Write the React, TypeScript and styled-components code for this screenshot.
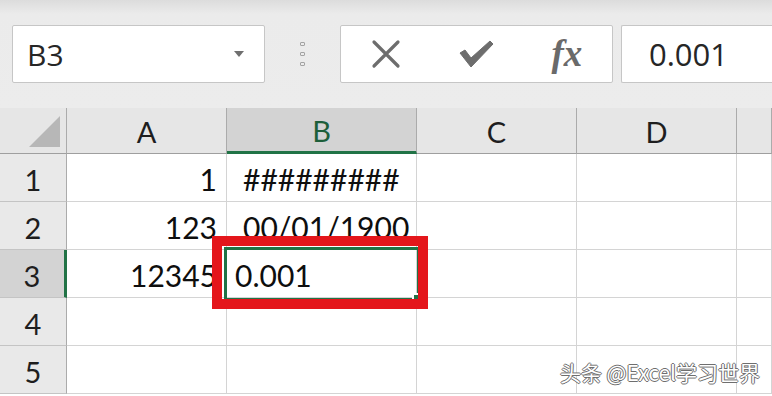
import { Fragment } from 'react';
import styled, { createGlobalStyle } from 'styled-components';

const GlobalStyle = createGlobalStyle`
  html, body {
    margin: 0;
    padding: 0;
    background: #fff;
    overflow: hidden;
  }
`;

const Page = styled.div`
  position: relative;
  width: 772px;
  height: 396px;
  overflow: hidden;
  background: #fff;
  font-family: Lato, 'Liberation Sans', sans-serif;
`;

// Formula bar
const Toolbar = styled.div`
  display: flex;
  align-items: flex-start;
  height: 108px;
  box-sizing: border-box;
  padding: 25px 0 0 12px;
  background: linear-gradient(#dcdcdc 0px, #ebebeb 14px, #ececec 100%);
`;
const Field = styled.div`
  height: 58px;
  box-sizing: border-box;
  background: #fff;
  border: 1px solid #c6c6c6;
  border-radius: 2px;
  display: flex;
  align-items: center;
  font-family: 'Open Sans', 'Noto Sans', sans-serif;
  font-size: 30px;
  color: #262626;
`;
const NameBox = styled(Field)`
  width: 253px;
  padding: 0 20px 0 14px;
  justify-content: space-between;
`;
const DropArrow = styled.span`
  width: 0;
  height: 0;
  border-left: 5px solid transparent;
  border-right: 5px solid transparent;
  border-top: 6px solid #6f6f6f;
`;
const Grip = styled.div`
  width: 75px;
  height: 58px;
  display: flex;
  flex-direction: column;
  align-items: center;
  justify-content: center;
  gap: 6px;
`;
const GripDot = styled.span`
  width: 5px;
  height: 4px;
  border: 1px solid #a3a3a3;
  border-radius: 1px;
  box-sizing: border-box;
`;
const FxBox = styled(Field)`
  width: 273px;
  margin-right: 8px;
`;
const FxButton = styled.div`
  flex: 1;
  height: 100%;
  display: flex;
  align-items: center;
  justify-content: center;
`;
const FxLabel = styled.span`
  font-family: 'Liberation Serif', 'DejaVu Serif', serif;
  font-style: italic;
  font-weight: 700;
  font-size: 37px;
  color: #6a6a6a;
  letter-spacing: 0;
  margin-top: -2px;
`;
const FormulaInput = styled(Field)`
  flex: 1;
  border-right: none;
  border-radius: 2px 0 0 2px;
  padding-left: 27px;
  font-size: 31px;
`;

// Sheet grid
const Sheet = styled.div`
  display: grid;
  grid-template-columns: 67px 160px 190px 160px 160px 1fr;
  grid-template-rows: 46px;
  grid-auto-rows: 48px;
  background: #fff;
`;
const ColHeader = styled.div<{ $active?: boolean }>`
  display: flex;
  align-items: center;
  justify-content: center;
  box-sizing: border-box;
  padding-top: 2px;
  background: ${(p) => (p.$active ? '#d3d3d3' : '#e6e6e6')};
  border-right: 1px solid #ababab;
  border-bottom: ${(p) => (p.$active ? '3px solid #217346' : '1px solid #9f9f9f')};
  font-size: 29px;
  color: ${(p) => (p.$active ? '#1d5f3a' : '#1e1e1e')};
`;
const Corner = styled(ColHeader)`
  position: relative;
  &::after {
    content: '';
    position: absolute;
    right: 6px;
    bottom: 6px;
    width: 0;
    height: 0;
    border-left: 31px solid transparent;
    border-bottom: 31px solid #b7b7b7;
  }
`;
const RowHeader = styled.div<{ $active?: boolean }>`
  display: flex;
  align-items: center;
  justify-content: center;
  box-sizing: border-box;
  padding-top: 4px;
  background: ${(p) => (p.$active ? '#d3d3d3' : '#e9e9e9')};
  border-bottom: 1px solid #c4c4c4;
  border-right: ${(p) => (p.$active ? '3px solid #217346' : '1px solid #ababab')};
  font-size: 29px;
  color: #1e1e1e;
`;
const Cell = styled.div<{ $align?: 'left' | 'right'; $selected?: boolean }>`
  position: relative;
  display: flex;
  align-items: flex-end;
  justify-content: ${(p) => (p.$align === 'right' ? 'flex-end' : 'flex-start')};
  box-sizing: border-box;
  padding: 0 9px 7px ${(p) => (p.$selected ? '8px' : '16px')};
  border-right: 1px solid #d4d4d4;
  border-bottom: 1px solid #d4d4d4;
  font-size: 30px;
  line-height: 1;
  color: #0e0e0e;
  white-space: nowrap;
  outline: ${(p) => (p.$selected ? '3px solid #217346' : 'none')};
  z-index: ${(p) => (p.$selected ? 1 : 0)};
`;
const FillHandle = styled.span`
  position: absolute;
  right: -4px;
  bottom: -4px;
  width: 6px;
  height: 6px;
  background: #217346;
  border-left: 2px solid #fff;
  border-top: 2px solid #fff;
`;

// Overlays
const Annotation = styled.div`
  position: absolute;
  left: 212px;
  top: 236px;
  width: 216px;
  height: 73px;
  box-sizing: border-box;
  border: 10px solid #e4161b;
  z-index: 2;
`;
const Watermark = styled.div`
  position: absolute;
  right: 12px;
  bottom: 9px;
  font-family: 'Noto Sans CJK SC', 'Liberation Sans', sans-serif;
  font-size: 21px;
  color: #fff;
  text-shadow: 1px 0 0 #6e6e6e, -1px 0 0 #6e6e6e, 0 1px 0 #6e6e6e, 0 -1px 0 #6e6e6e;
  z-index: 3;
`;

const columns = ['A', 'B', 'C', 'D', ''];
const rows: Array<{ a: string; b: string }> = [
  { a: '1', b: '#########' },
  { a: '123', b: '00/01/1900' },
  { a: '12345', b: '0.001' },
  { a: '', b: '' },
  { a: '', b: '' },
];

const CancelIcon = () => (
  <svg width="30" height="30" viewBox="0 0 30 30">
    <path d="M3 3 L27 27 M27 3 L3 27" stroke="#6d6d6d" strokeWidth="3.2" strokeLinecap="round" />
  </svg>
);

const EnterIcon = () => (
  <svg width="36" height="30" viewBox="0 0 36 30">
    <path
      d="M2 14 L7 11 L13 19 L32 2 L35 5 L13 28 Z"
      fill="#6d6d6d"
      stroke="#6d6d6d"
      strokeWidth="1"
      strokeLinejoin="round"
    />
  </svg>
);

const App = () => {
  return (
    <Page>
      <GlobalStyle />
      <Toolbar>
        <NameBox>
          B3
          <DropArrow />
        </NameBox>
        <Grip>
          <GripDot />
          <GripDot />
          <GripDot />
        </Grip>
        <FxBox>
          <FxButton>
            <CancelIcon />
          </FxButton>
          <FxButton>
            <EnterIcon />
          </FxButton>
          <FxButton>
            <FxLabel>fx</FxLabel>
          </FxButton>
        </FxBox>
        <FormulaInput>0.001</FormulaInput>
      </Toolbar>

      <Sheet>
        <Corner />
        {columns.map((c, i) => (
          <ColHeader key={i} $active={c === 'B'}>
            {c}
          </ColHeader>
        ))}
        {rows.map((r, i) => (
          <Fragment key={i}>
            <RowHeader $active={i === 2}>{i + 1}</RowHeader>
            <Cell $align="right">{r.a}</Cell>
            <Cell $selected={i === 2}>
              {r.b}
              {i === 2 && <FillHandle />}
            </Cell>
            <Cell />
            <Cell />
            <Cell />
          </Fragment>
        ))}
      </Sheet>

      <Annotation />
      <Watermark>头条 @Excel学习世界</Watermark>
    </Page>
  );
};

export default App;
